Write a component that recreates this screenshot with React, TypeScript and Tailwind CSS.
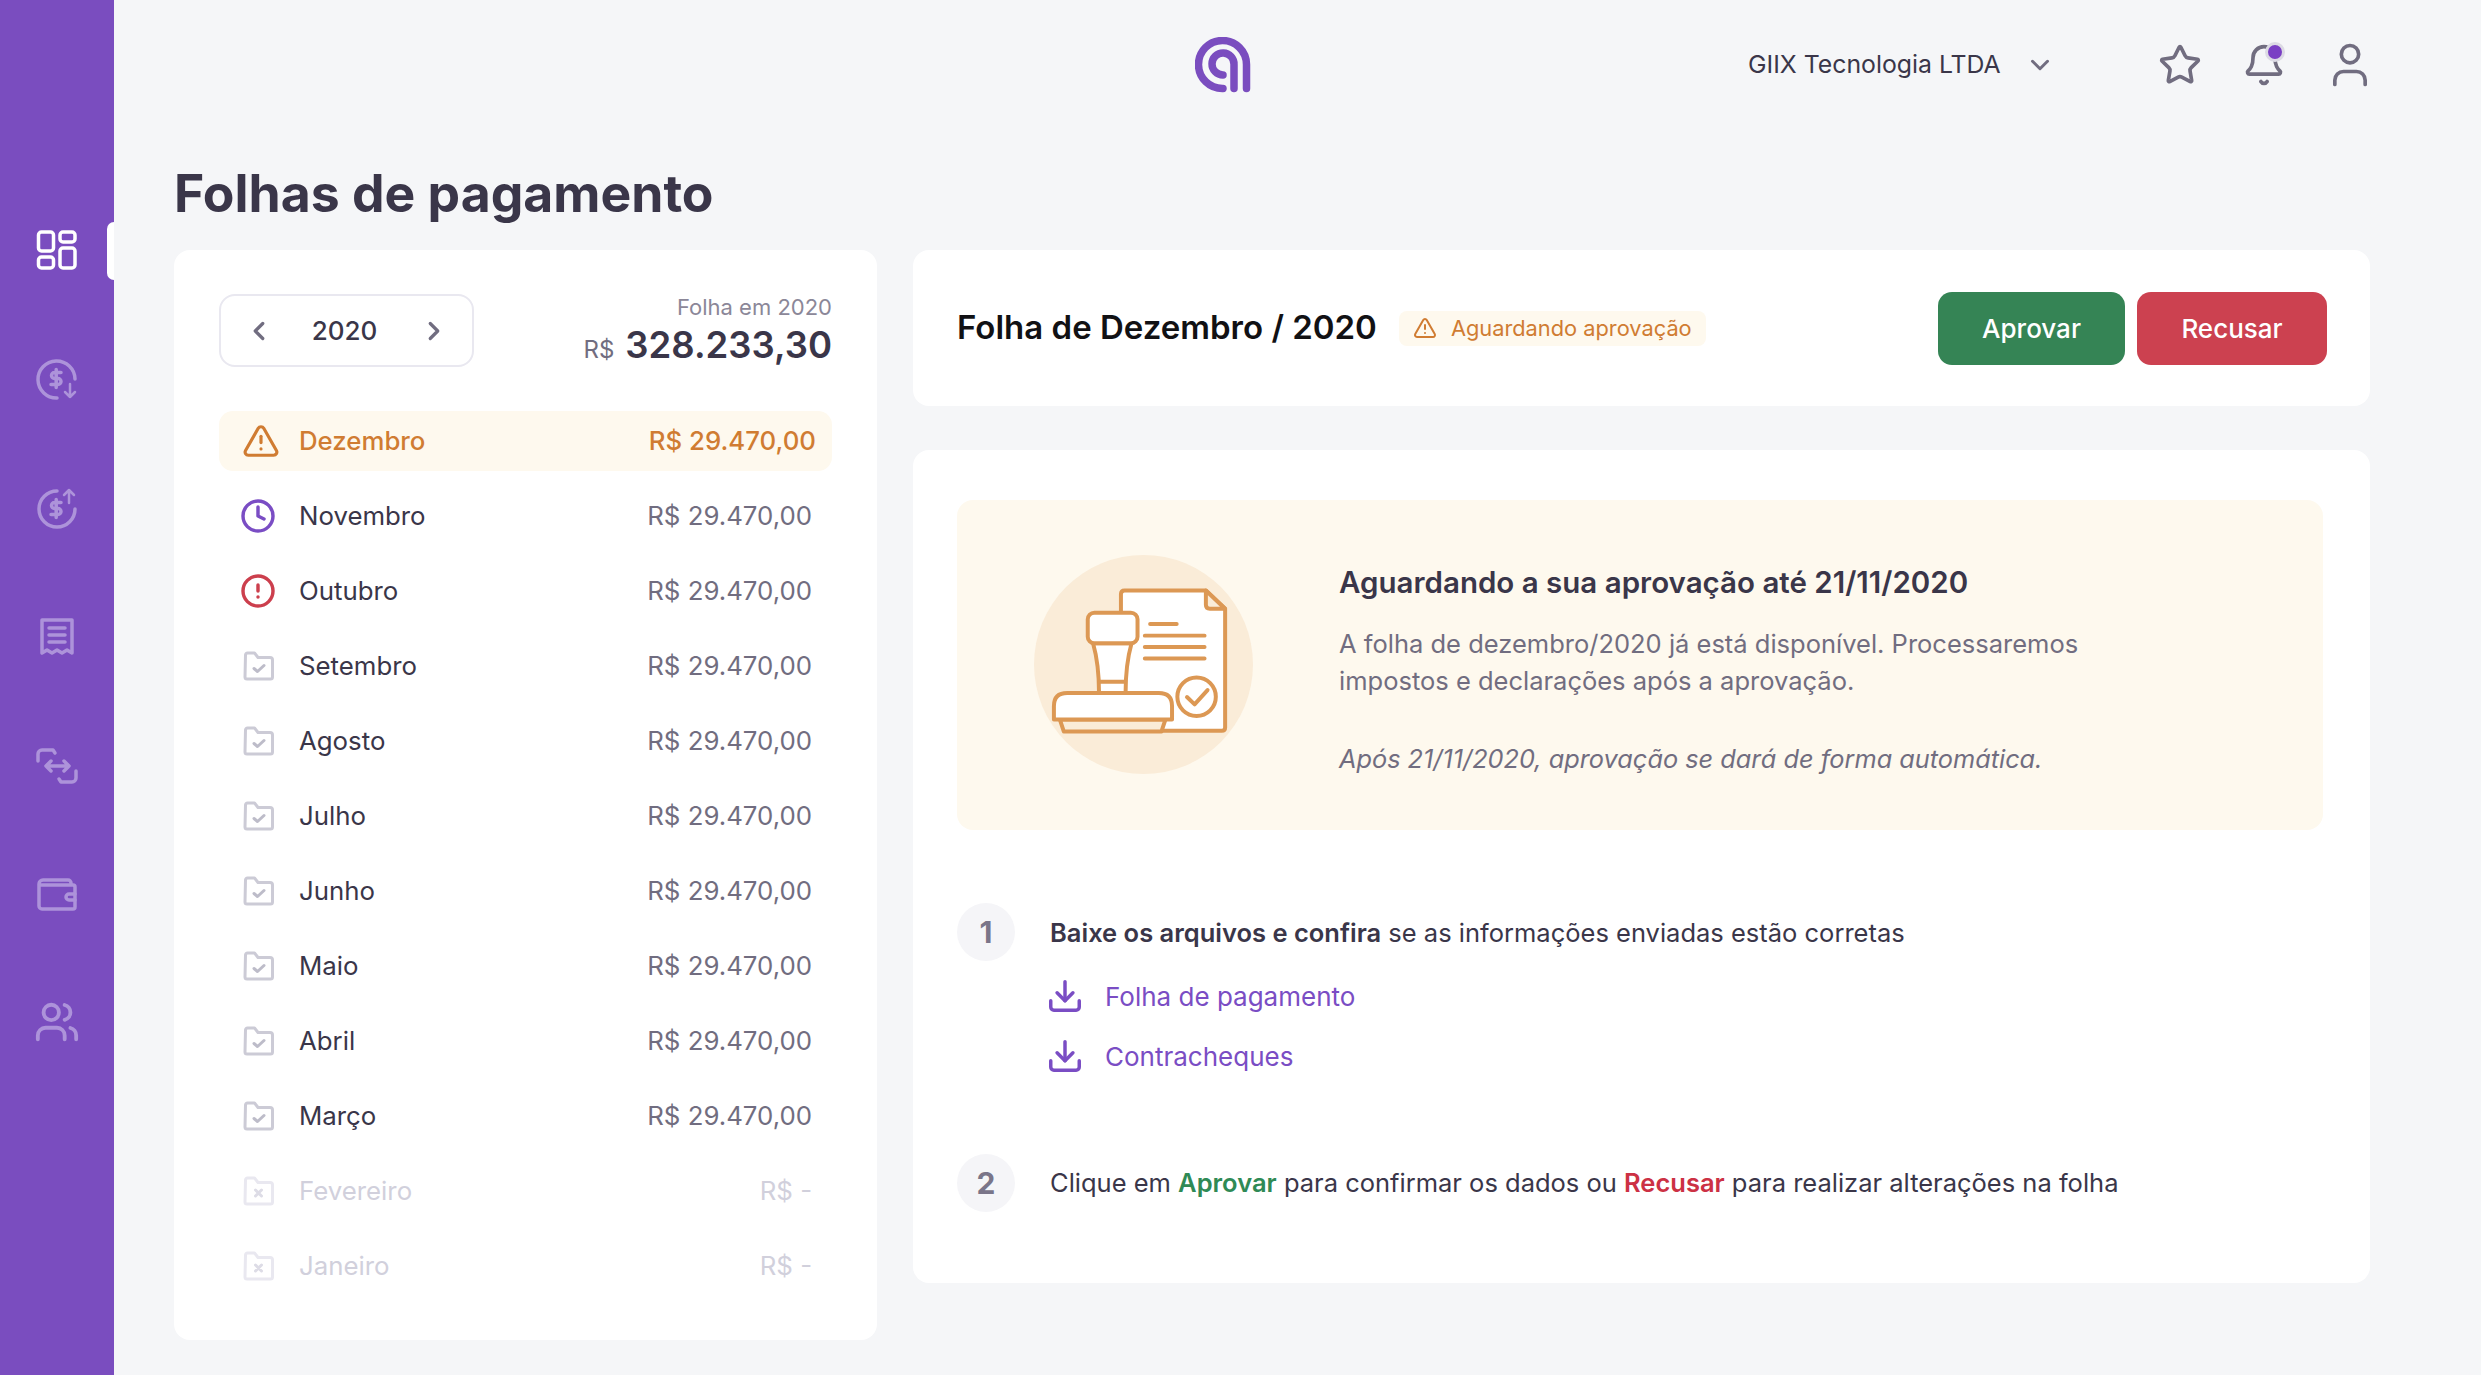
import { ChevronDown, ChevronLeft, ChevronRight, CircleAlert, Clock, Download, Star, TriangleAlert, User, Users, Bell } from "lucide-react";

type Status = "warning" | "pending" | "error" | "done" | "empty";

const months: { name: string; status: Status; amount: string }[] = [
  { name: "Dezembro", status: "warning", amount: "R$ 29.470,00" },
  { name: "Novembro", status: "pending", amount: "R$ 29.470,00" },
  { name: "Outubro", status: "error", amount: "R$ 29.470,00" },
  { name: "Setembro", status: "done", amount: "R$ 29.470,00" },
  { name: "Agosto", status: "done", amount: "R$ 29.470,00" },
  { name: "Julho", status: "done", amount: "R$ 29.470,00" },
  { name: "Junho", status: "done", amount: "R$ 29.470,00" },
  { name: "Maio", status: "done", amount: "R$ 29.470,00" },
  { name: "Abril", status: "done", amount: "R$ 29.470,00" },
  { name: "Março", status: "done", amount: "R$ 29.470,00" },
  { name: "Fevereiro", status: "empty", amount: "R$ -" },
  { name: "Janeiro", status: "empty", amount: "R$ -" },
];

function Logo() {
  return (
    <svg width="56" height="56" viewBox="0 0 56 56" fill="none" stroke="#7a4dbf" strokeWidth="7.5" strokeLinecap="round">
      <path d="M28 51.5A24 24 0 1 1 51.5 27.5V51.5" />
      <path d="M28 38A11 11 0 1 1 39 27.5V51.5" />
    </svg>
  );
}

const dollar = "M25 14.5h-6.500a3 3 0 0 0 0 6h3.500a3 3 0 0 1 0 6h-7M20.200 11.500v18";

function SideIcon({ kind }: { kind: string }) {
  const stroke = kind === "grid" ? "#ffffff" : "#ad93da";
  return (
    <svg width="42" height="42" viewBox="0 0 42 42" fill="none" stroke={stroke} strokeWidth="3.500" strokeLinecap="round" strokeLinejoin="round">
      {kind === "grid" && (
        <>
          <rect x="2.500" y="3" width="15" height="19" rx="3" />
          <rect x="2.500" y="28" width="15" height="11" rx="3" />
          <rect x="24" y="3" width="15" height="10" rx="3" />
          <rect x="24" y="19" width="15" height="20" rx="3" />
        </>
      )}
      {kind === "in" && (
        <>
          <path d="M21 40A18.500 18.500 0 1 1 39 21" />
          <path d={dollar} />
          <path d="M34 26v13M29 34l5 5 5-5" strokeWidth="2.500" />
        </>
      )}
      {kind === "out" && (
        <>
          <path d="M21 4A18 18 0 1 0 39 22" />
          <path d={dollar} transform="translate(0 1)" />
          <path d="M33 16V3M28 8l5-5 5 5" strokeWidth="2.500" />
        </>
      )}
      {kind === "receipt" && (
        <>
          <path d="M6 4h30v33l-5-3-5 3-5-3-5 3-5-3-5 3z" />
          <path d="M13 12h16M13 19h16M13 26h16" />
        </>
      )}
      {kind === "swap" && (
        <>
          <path d="M2 16V9a4 4 0 0 1 4-4h11l2 3" />
          <path d="M40 26v7a4 4 0 0 1-4 4H25l-2-3" />
          <path d="M10 21h23M15 16l-5 5 5 5M28 16l5 5-5 5" />
        </>
      )}
      {kind === "wallet" && (
        <>
          <path d="M35 11V9a3 3 0 0 0-3-3H7a4 4 0 0 0-4 4v22a3 3 0 0 0 3 3h31a2 2 0 0 0 2-2V13a2 2 0 0 0-2-2H3" />
          <path d="M39 20h-6a3 3 0 0 0 0 6h6" />
        </>
      )}
    </svg>
  );
}

function Sidebar() {
  return (
    <aside className="relative flex h-full w-[114px] shrink-0 flex-col items-center gap-[87px] bg-[#7a4dbf] pt-[229px]">
      <div className="absolute top-[222px] right-0 h-[58px] w-[7px] rounded-l-lg bg-white" />
      <SideIcon kind="grid" />
      <SideIcon kind="in" />
      <SideIcon kind="out" />
      <SideIcon kind="receipt" />
      <SideIcon kind="swap" />
      <SideIcon kind="wallet" />
      <Users size={46} strokeWidth={2} color="#ad93da" className="-mt-[4px]" />
    </aside>
  );
}

function FolderIcon({ empty }: { empty: boolean }) {
  const stroke = empty ? "#e9e8f0" : "#cccbd6";
  const mark = empty ? "#dddce6" : "#bdbcc9";
  return (
    <svg width="32" height="32" viewBox="0 0 32 32" fill="none" stroke={stroke} strokeWidth="3" strokeLinecap="round" strokeLinejoin="round">
      <path d="M2.500 5a2 2 0 0 1 2-2h7l3.500 4.500h12a2.500 2.500 0 0 1 2.500 2.500v17a2 2 0 0 1-2 2h-23.500a2 2 0 0 1-2-2z" />
      {empty ? (
        <path d="M12.500 15l6 6M18.500 15l-6 6" stroke={mark} />
      ) : (
        <path d="M11 18.500l3.500 3 6.500-6" stroke={mark} />
      )}
    </svg>
  );
}

function StatusIcon({ status }: { status: Status }) {
  if (status === "warning") return <TriangleAlert size={38} strokeWidth={2} color="#d07c32" className="-ml-[1px]" />;
  if (status === "pending") return <Clock size={36} strokeWidth={2.300} color="#7a4dc4" className="-ml-[3px]" />;
  if (status === "error") return <CircleAlert size={36} strokeWidth={2.300} color="#cc3f4d" className="-ml-[3px]" />;
  return <FolderIcon empty={status === "empty"} />;
}

function MonthRow({ name, status, amount }: { name: string; status: Status; amount: string }) {
  const active = status === "warning";
  const empty = status === "empty";
  return (
    <div className={`flex h-[60px] items-center rounded-[14px] pl-[24px] text-[25.800px] ${active ? "bg-[#fef9ee] pr-[16px]" : "pr-[20px]"}`}>
      <div className="flex w-[56px] shrink-0 items-center">
        <StatusIcon status={status} />
      </div>
      <span className={active ? "font-medium text-[#d07c32]" : empty ? "text-[#d1d0dc]" : "text-[#3a3649]"}>{name}</span>
      <span className={`ml-auto ${active ? "font-medium text-[#d07c32]" : empty ? "text-[#d1d0dc]" : "text-[#716d80]"}`}>{amount}</span>
    </div>
  );
}

function MonthsCard() {
  return (
    <section className="h-[1090px] w-[703px] shrink-0 rounded-2xl bg-white px-[45px] pt-[44px]">
      <div className="flex h-[73px] items-center justify-between">
        <div className="flex h-[73px] w-[255px] items-center justify-between rounded-2xl border-2 border-[#e9e8f0] pr-[23px] pl-[29px]">
          <ChevronLeft size={30} strokeWidth={2.600} color="#716d80" className="-ml-[6px]" />
          <span className="-ml-[4px] text-[26px] font-medium text-[#3a3649]">2020</span>
          <ChevronRight size={30} strokeWidth={2.600} color="#716d80" />
        </div>
        <div className="flex flex-col items-end pt-[4px]">
          <span className="text-[22px] leading-[30px] text-[#8b8798]">Folha em 2020</span>
          <div className="flex items-baseline gap-[11px] leading-[46px]">
            <span className="text-[24px] text-[#716d80]">R$</span>
            <span className="text-[36.500px] font-semibold text-[#3a3649]">328.233,30</span>
          </div>
        </div>
      </div>
      <div className="mt-[44px] flex flex-col gap-[15px]">
        {months.map((m) => (
          <MonthRow key={m.name} {...m} />
        ))}
      </div>
    </section>
  );
}

function StampArt() {
  return (
    <svg width="219" height="219" viewBox="222 190 660 660" fill="none" stroke="#dc9854" strokeWidth="12" strokeLinejoin="round" strokeLinecap="round" className="-mt-[2px] shrink-0">
      <circle cx="552" cy="520" r="330" fill="#faecd8" stroke="none" />
      <path d="M484 360V308Q484 297 495 297H740L798 352V710Q798 720 788 720H484Z" fill="#ffffff" />
      <path d="M740 297V340Q740 352 752 352H798Z" fill="#faecd8" />
      <path d="M572 398H652M556 433H736M556 467H736M556 502H736" />
      <circle cx="712" cy="617" r="58" />
      <path d="M683 618L706 640L745 597" />
      <path d="M400 456Q418 520 418 606H498Q498 520 516 456Z" fill="#ffffff" />
      <path d="M420 572H496" />
      <rect x="384" y="364" width="150" height="92" rx="20" fill="#ffffff" />
      <path d="M300 686L312 722H606L618 686Z" fill="#faecd8" />
      <path d="M282 686V645Q282 606 322 606H598Q638 606 638 645V686Z" fill="#ffffff" />
    </svg>
  );
}

function Notice() {
  return (
    <div className="flex h-[330px] items-center rounded-2xl bg-[#fef9ee] pl-[77px]">
      <StampArt />
      <div className="ml-[86px] w-[800px] pt-[10px]">
        <h3 className="text-[29.500px] leading-[40px] font-semibold text-[#3a3649]">Aguardando a sua aprovação até 21/11/2020</h3>
        <p className="mt-[24px] text-[25.500px] leading-[36.500px] text-[#716d80]">
          A folha de dezembro/2020 já está disponível. Processaremos
          <br />
          impostos e declarações após a aprovação.
        </p>
        <p className="mt-[42px] text-[25.300px] leading-[36.500px] text-[#716d80] italic">Após 21/11/2020, aprovação se dará de forma automática.</p>
      </div>
    </div>
  );
}

function StepNumber({ n }: { n: string }) {
  return (
    <div className="flex h-[58px] w-[58px] shrink-0 items-center justify-center rounded-full bg-[#f5f5f8] text-[30px] font-bold text-[#7a7589]">{n}</div>
  );
}

function FileLink({ label }: { label: string }) {
  return (
    <a className="flex h-[60px] items-center gap-[21px] text-[26px] text-[#7a4dc4]">
      <Download size={38} strokeWidth={2.200} className="-ml-[4px]" />
      <span>{label}</span>
    </a>
  );
}

function DetailCard() {
  return (
    <section className="h-[833px] rounded-2xl bg-white pt-[50px] pr-[47px] pl-[44px]">
      <Notice />
      <div className="mt-[73px] flex gap-[35px]">
        <StepNumber n="1" />
        <div>
          <p className="flex h-[60px] items-center pt-[1px] text-[25.500px] whitespace-pre text-[#3a3649]">
            <span className="font-semibold">Baixe os arquivos e confira</span> se as informações enviadas estão corretas
          </p>
          <div className="mt-[3px]">
            <FileLink label="Folha de pagamento" />
            <FileLink label="Contracheques" />
          </div>
        </div>
      </div>
      <div className="mt-[68px] flex items-center gap-[35px]">
        <StepNumber n="2" />
        <p className="pt-[1px] text-[25.500px] whitespace-pre text-[#3a3649]">
          Clique em <span className="font-semibold text-[#2f8a55]">Aprovar</span> para confirmar os dados ou{" "}
          <span className="font-semibold text-[#cc3144]">Recusar</span> para realizar alterações na folha
        </p>
      </div>
    </section>
  );
}

export default function App() {
  return (
    <div className="flex h-[1375px] w-[2481px] overflow-hidden bg-[#f5f6f8] font-[Inter,sans-serif]">
      <Sidebar />
      <main className="w-[2367px] pr-[111px] pl-[60px]">
        <header className="flex h-[130px] items-center">
          <div className="ml-[1021px] shrink-0">
            <Logo />
          </div>
          <span className="ml-[497px] w-[252px] shrink-0 text-[24.800px] whitespace-nowrap text-[#3a3649]">GIIX Tecnologia LTDA</span>
          <ChevronDown size={30} strokeWidth={2.400} color="#716d80" className="ml-[25px] shrink-0" />
          <Star size={44} strokeWidth={2} color="#716d80" className="ml-[103px] shrink-0" />
          <div className="relative ml-[40px] shrink-0">
            <Bell size={44} strokeWidth={2} color="#716d80" />
            <span className="absolute top-[-1px] right-[1px] h-[20px] w-[20px] rounded-full border-[3px] border-[#dcdae4] bg-[#7a3fc4]" />
          </div>
          <User size={52} strokeWidth={1.700} color="#716d80" className="ml-[38px] shrink-0" />
        </header>
        <h1 className="flex h-[120px] items-center pt-[8px] text-[51.700px] font-bold text-[#3a3649]">Folhas de pagamento</h1>
        <div className="flex gap-[36px]">
          <MonthsCard />
          <div className="flex min-w-0 flex-1 flex-col gap-[44px]">
            <section className="flex h-[156px] items-center rounded-2xl bg-white pr-[43px] pl-[44px]">
              <h2 className="text-[33px] font-semibold text-[#111114]">Folha de Dezembro / 2020</h2>
              <div className="ml-[22px] flex h-[35px] items-center gap-[14px] rounded-lg bg-[#fef9ee] px-[14px] text-[21.800px] text-[#d07c32]">
                <TriangleAlert size={24} strokeWidth={2} />
                <span>Aguardando aprovação</span>
              </div>
              <button type="button" className="ml-auto h-[73px] w-[187px] rounded-[14px] bg-[#358455] text-[26px] font-medium text-white">
                Aprovar
              </button>
              <button type="button" className="ml-[12px] h-[73px] w-[190px] rounded-[14px] bg-[#cc4150] text-[26px] font-medium text-white">
                Recusar
              </button>
            </section>
            <DetailCard />
          </div>
        </div>
      </main>
    </div>
  );
}
